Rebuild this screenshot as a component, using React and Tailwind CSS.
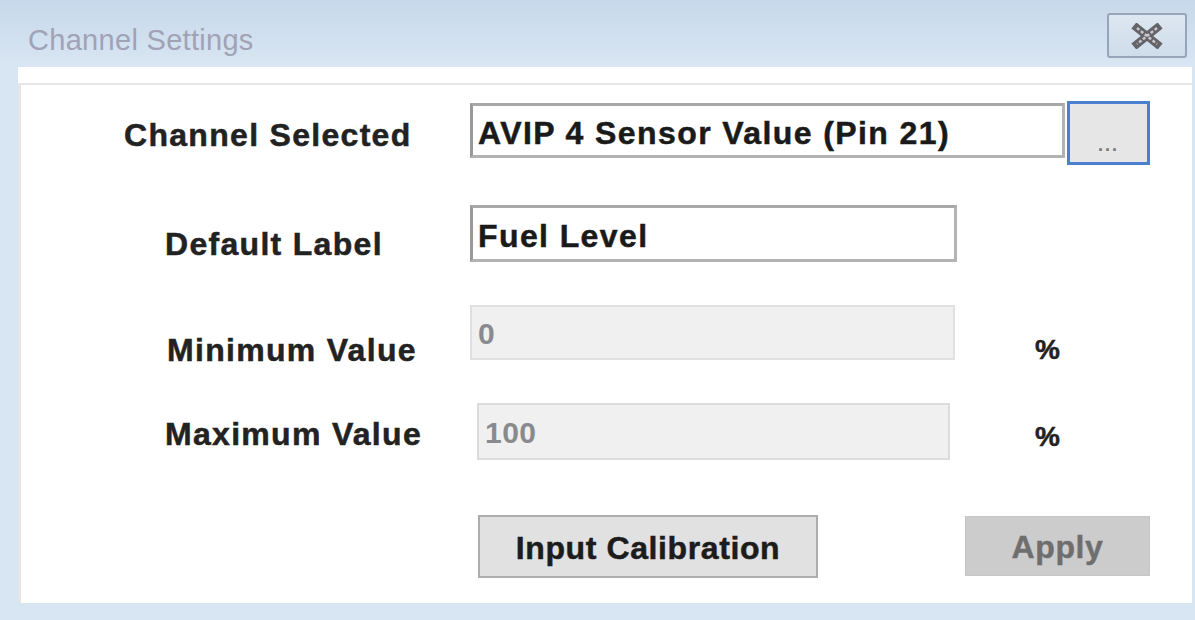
import React from 'react'

const CloseGlyph = () => (
  <svg width="36" height="26" viewBox="0 0 36 26">
    <path d="M8 5 L28 21 M28 5 L8 21" stroke="#646468" strokeWidth="8" strokeLinecap="square" fill="none" />
    <path d="M8 5 L28 21 M28 5 L8 21" stroke="#c9c9cf" strokeWidth="2.5" strokeDasharray="3 2" fill="none" />
  </svg>
)

const Label = ({ children, pad, top, width = 'w-[449px]' }) => (
  <div className={`${width} shrink-0`} style={{ paddingLeft: pad, marginTop: top }}>
    <span className="text-[32px] leading-[36px] font-bold tracking-[1.3px] text-[#222] [-webkit-text-stroke:0.5px_#222] whitespace-nowrap">{children}</span>
  </div>
)

export default function App() {
  return (
    <div className="w-[1195px] h-[620px] bg-[#d8e5f2] flex flex-col font-['Liberation_Sans',Arial,sans-serif] overflow-hidden">
      {/* title bar */}
      <div className="h-[67px] shrink-0 bg-gradient-to-b from-[#c6d8ea] to-[#d9e6f3] flex items-start justify-between">
        <span className="pl-[28px] pt-[23px] text-[29px] leading-[34px] tracking-[0.3px] text-[#a0a2b6]">Channel Settings</span>
        <div className="mt-[13px] mr-[8px] w-[80px] h-[45px] rounded-[3px] border-2 border-[#98a4ba] bg-gradient-to-b from-[#dde7f2] to-[#cfdcea] flex items-center justify-center">
          <CloseGlyph />
        </div>
      </div>

      {/* client area */}
      <div className="flex-1 ml-[18px] mr-[3px] mb-[17px] bg-white flex flex-col">
        <div className="h-[16px] shrink-0" />
        <div className="flex-1 border-t-2 border-l-[3px] border-[#e6e6e6] flex flex-col">
          {/* channel selected */}
          <div className="flex items-start h-[64px] mt-[16px]">
            <Label pad={103} top={16}>Channel Selected</Label>
            <div className="w-[595px] h-[55px] mt-[2px] border-[3px] border-[#b3b3b3] border-l-[#999] border-t-[#a8a8a8] bg-white flex items-center pl-[5px] pt-[4px]">
              <span className="text-[32px] font-bold tracking-[1.4px] text-[#1a1a1a] [-webkit-text-stroke:0.5px_#1a1a1a] whitespace-nowrap">AVIP 4 Sensor Value (Pin 21)</span>
            </div>
            <div className="ml-[2px] w-[83px] h-[64px] border-[3px] border-[#4a7fd1] bg-[#e6e6e6] flex items-end justify-center pb-[10px]">
              <span className="text-[18px] leading-[14px] font-bold tracking-[2px] text-[#777]">...</span>
            </div>
          </div>

          {/* default label */}
          <div className="flex items-start h-[57px] mt-[40px]">
            <Label pad={144} top={21}>Default Label</Label>
            <div className="w-[487px] h-[57px] border-[3px] border-[#b3b3b3] border-l-[#999] border-t-[#a8a8a8] bg-white flex items-center pl-[5px] pt-[4px]">
              <span className="text-[32px] font-bold tracking-[1.4px] text-[#1a1a1a] [-webkit-text-stroke:0.5px_#1a1a1a]">Fuel Level</span>
            </div>
          </div>

          {/* minimum */}
          <div className="flex items-start h-[55px] mt-[43px]">
            <Label pad={146} top={27}>Minimum Value</Label>
            <div className="w-[485px] h-[55px] border-2 border-[#e0e0e0] bg-[#f0f0f0] flex items-center pl-[6px] pt-[2px]">
              <span className="text-[30px] font-bold text-[#888a8e]">0</span>
            </div>
            <span className="ml-[80px] mt-[27px] text-[28px] leading-[36px] font-bold text-[#222] [-webkit-text-stroke:0.5px_#222]">%</span>
          </div>

          {/* maximum */}
          <div className="flex items-start h-[57px] mt-[43px]">
            <Label pad={144} top={13} width="w-[456px]">Maximum Value</Label>
            <div className="w-[473px] h-[57px] border-2 border-[#dcdcdc] bg-[#f0f0f0] flex items-center pl-[6px] pt-[2px]">
              <span className="text-[30px] font-bold tracking-[0.5px] text-[#888a8e]">100</span>
            </div>
            <span className="ml-[85px] mt-[16px] text-[28px] leading-[36px] font-bold text-[#222] [-webkit-text-stroke:0.5px_#222]">%</span>
          </div>

          {/* buttons */}
          <div className="flex items-start h-[63px] mt-[55px]">
            <div className="w-[457px] shrink-0" />
            <div className="w-[340px] h-[63px] border-2 border-[#adadad] bg-[#e1e1e1] flex items-center justify-center pt-[2px]">
              <span className="text-[32px] font-bold tracking-[0.6px] text-[#1c1c1c] [-webkit-text-stroke:0.5px_#1c1c1c]">Input Calibration</span>
            </div>
            <div className="ml-[147px] mt-[1px] w-[185px] h-[60px] border border-[#c6c6c6] bg-[#cccccc] flex items-center justify-center pt-[2px]">
              <span className="text-[32px] font-bold tracking-[0.6px] text-[#6e6e6e] [-webkit-text-stroke:0.4px_#6e6e6e]">Apply</span>
            </div>
          </div>
        </div>
      </div>
    </div>
  )
}
